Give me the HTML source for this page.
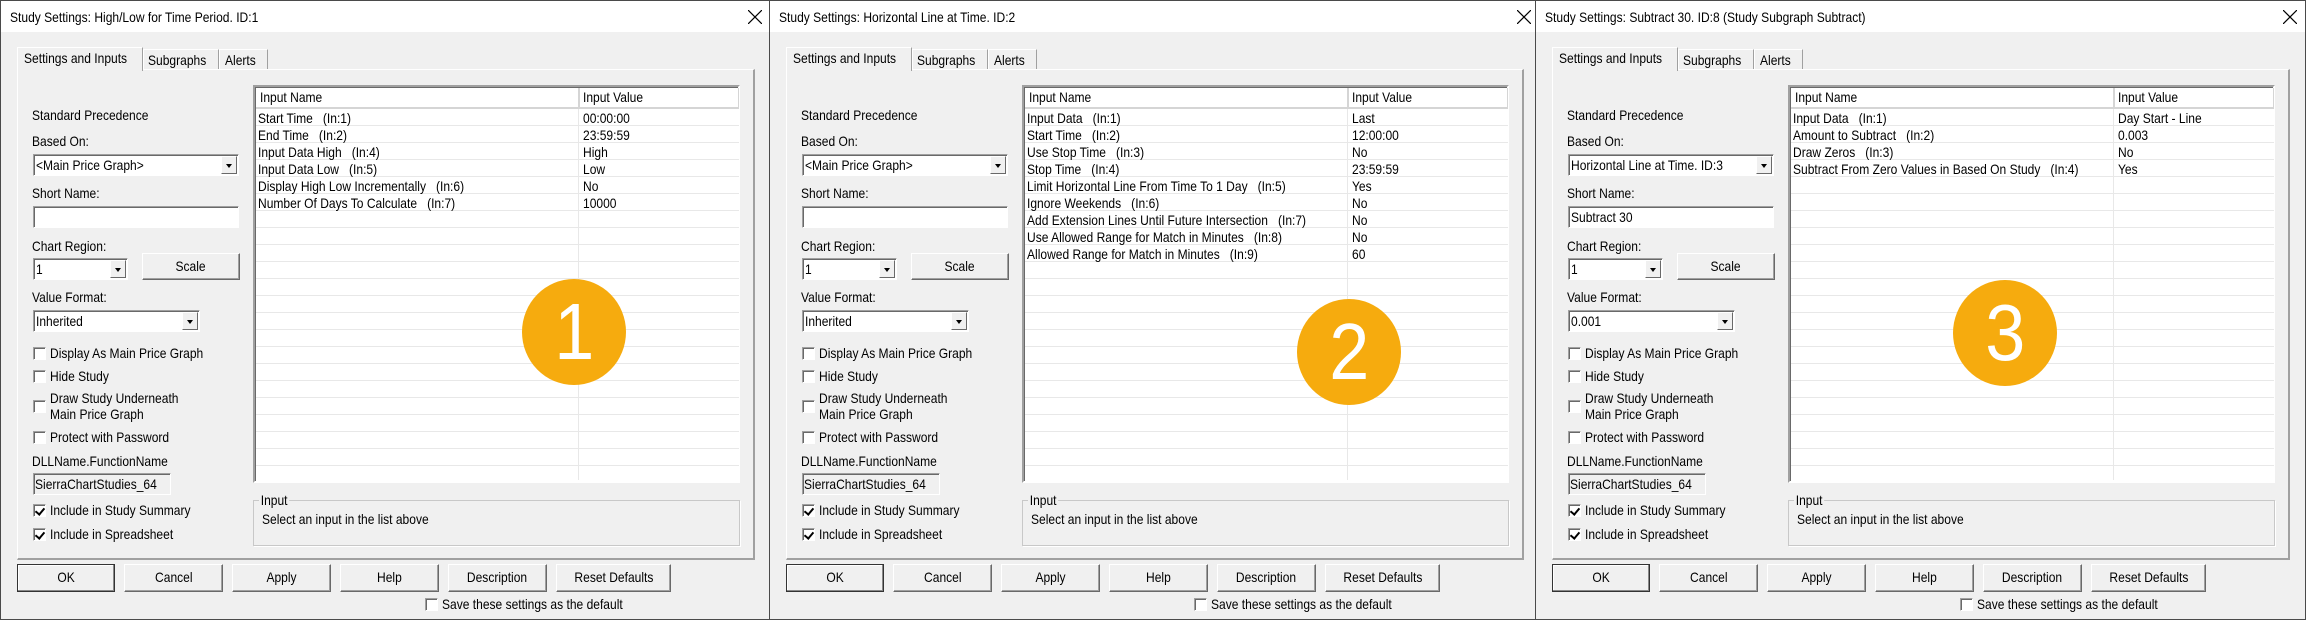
<!DOCTYPE html>
<html><head><meta charset="utf-8">
<style>
*{margin:0;padding:0;box-sizing:border-box}
body{width:2306px;height:620px;background:#f0f0f0;position:relative;overflow:hidden;font-family:"Liberation Sans",Arial,sans-serif;font-size:14px;color:#000}
.dlg{position:absolute;top:0;width:771px;height:620px;background:#f0f0f0;border:1px solid #4a4a4a}
.dlg div,.dlg span{position:absolute}
.tb{left:0;top:0;right:0;height:31px;background:#fff}
.t{white-space:nowrap;line-height:16px;height:16px;transform:scaleX(.86);transform-origin:0 50%}
.tab{background:#f0f0f0;border:1px solid #fff;border-right:1px solid #a0a0a0;border-bottom:none}
.panel{left:16px;top:68px;width:738px;height:491px;border:1px solid #fff;border-right:2px solid #a0a0a0;border-bottom:2px solid #a0a0a0}
.sunk{background:#fff;border:1px solid #a0a0a0;border-right-color:#fff;border-bottom-color:#fff;box-shadow:inset 1px 1px 0 #696969}
.dd{right:1px;top:1px;width:16px;height:18px;background:#f0f0f0;border:1px solid #fff;border-right-color:#696969;border-bottom-color:#696969}
.dd:after{content:"";position:absolute;left:4px;top:7px;border-left:3px solid transparent;border-right:3px solid transparent;border-top:4px solid #000}
.cb{width:13px;height:13px;background:#fff;border:1px solid #a0a0a0;border-right-color:#fff;border-bottom-color:#fff;box-shadow:inset 1px 1px 0 #696969}
.ck:after{content:"";position:absolute;left:3px;top:1px;width:4px;height:7px;border:solid #000;border-width:0 2px 2px 0;transform:rotate(40deg)}
.btn{height:28px;background:#f0f0f0;border:1px solid #fff;border-right-color:#696969;border-bottom-color:#696969;box-shadow:inset -1px -1px 0 #a0a0a0;text-align:center;line-height:25px}
.btn span{position:static!important;display:inline-block;transform:scaleX(.86)}
.list{left:252px;top:84px;width:487px;height:398px;background:#fff;border:2px solid #a0a0a0;border-right-color:#fff;border-bottom-color:#fff;box-shadow:inset 1px 1px 0 #696969}
.hdr{left:1px;top:1px;width:483px;height:21px;background:#fff;border-bottom:2px solid #d5d5d5}
.grid{left:1px;top:22px;width:483px;height:371px;background:repeating-linear-gradient(to bottom,transparent 0,transparent 16px,#e8e8e8 16px,#e8e8e8 17px)}
.vl{left:323px;top:22px;width:1px;height:371px;background:#e8e8e8}
.circ{width:104px;height:106px;border-radius:50%;background:#f6ab0e;color:#fff;font-size:80px;text-align:center;line-height:106px}
.circ span{position:static!important;display:inline-block;transform:scaleX(.9)}
.grp{left:252px;top:499px;width:487px;height:46px;border:1px solid #c8c8c8;box-shadow:1px 1px 0 #fff}
</style></head><body>

<!-- DIALOG 1 -->
<div class="dlg" style="left:0">
 <div class="tb"></div>
 <span class="t" style="left:9px;top:8px">Study Settings: High/Low for Time Period. ID:1</span>
 <svg style="position:absolute;left:747px;top:9px" width="14" height="14"><path d="M0 0L14 14M14 0L0 14" stroke="#000" stroke-width="1.2"/></svg>
 <div class="panel"></div>
 <div class="tab" style="left:16px;top:46px;width:126px;height:24px"></div>
 <span class="t" style="left:23px;top:49px">Settings and Inputs</span>
 <div class="tab" style="left:142px;top:48px;width:76px;height:20px"></div>
 <span class="t" style="left:147px;top:51px">Subgraphs</span>
 <div class="tab" style="left:218px;top:48px;width:49px;height:20px"></div>
 <span class="t" style="left:224px;top:51px">Alerts</span>
 <span class="t" style="left:31px;top:106px">Standard Precedence</span>
 <span class="t" style="left:31px;top:132px">Based On:</span>
 <div class="sunk" style="left:32px;top:153px;width:206px;height:22px"><div class="dd"></div></div>
 <span class="t" style="left:35px;top:156px">&lt;Main Price Graph&gt;</span>
 <span class="t" style="left:31px;top:184px">Short Name:</span>
 <div class="sunk" style="left:32px;top:205px;width:206px;height:22px"></div>
 <span class="t" style="left:31px;top:237px">Chart Region:</span>
 <div class="sunk" style="left:32px;top:257px;width:95px;height:22px"><div class="dd"></div></div>
 <span class="t" style="left:35px;top:260px">1</span>
 <div class="btn" style="left:141px;top:252px;width:98px;height:27px"><span>Scale</span></div>
 <span class="t" style="left:31px;top:288px">Value Format:</span>
 <div class="sunk" style="left:32px;top:309px;width:167px;height:22px"><div class="dd"></div></div>
 <span class="t" style="left:35px;top:312px">Inherited</span>
 <div class="cb" style="left:32px;top:346px"></div><span class="t" style="left:49px;top:344px">Display As Main Price Graph</span>
 <div class="cb" style="left:32px;top:369px"></div><span class="t" style="left:49px;top:367px">Hide Study</span>
 <div class="cb" style="left:32px;top:399px"></div><span class="t" style="left:49px;top:389px">Draw Study Underneath</span><span class="t" style="left:49px;top:405px">Main Price Graph</span>
 <div class="cb" style="left:32px;top:430px"></div><span class="t" style="left:49px;top:428px">Protect with Password</span>
 <span class="t" style="left:31px;top:452px">DLLName.FunctionName</span>
 <div class="sunk" style="left:32px;top:472px;width:138px;height:22px;background:#f0f0f0"></div>
 <span class="t" style="left:34px;top:475px">SierraChartStudies_64</span>
 <div class="cb ck" style="left:32px;top:503px"></div><span class="t" style="left:49px;top:501px">Include in Study Summary</span>
 <div class="cb ck" style="left:32px;top:527px"></div><span class="t" style="left:49px;top:525px">Include in Spreadsheet</span>
 <div class="list"><div class="hdr"><div style="left:322px;top:0;width:2px;height:20px;background:#d5d5d5"></div><div style="left:482px;top:0;width:1px;height:20px;background:#d5d5d5"></div></div><div class="grid"></div><div class="vl"></div></div>
 <span class="t" style="left:259px;top:88px">Input Name</span><span class="t" style="left:582px;top:88px">Input Value</span>
 <span class="t" style="left:257px;top:109px">Start Time&nbsp;&nbsp; (In:1)</span><span class="t" style="left:582px;top:109px">00:00:00</span>
 <span class="t" style="left:257px;top:126px">End Time&nbsp;&nbsp; (In:2)</span><span class="t" style="left:582px;top:126px">23:59:59</span>
 <span class="t" style="left:257px;top:143px">Input Data High&nbsp;&nbsp; (In:4)</span><span class="t" style="left:582px;top:143px">High</span>
 <span class="t" style="left:257px;top:160px">Input Data Low&nbsp;&nbsp; (In:5)</span><span class="t" style="left:582px;top:160px">Low</span>
 <span class="t" style="left:257px;top:177px">Display High Low Incrementally&nbsp;&nbsp; (In:6)</span><span class="t" style="left:582px;top:177px">No</span>
 <span class="t" style="left:257px;top:194px">Number Of Days To Calculate&nbsp;&nbsp; (In:7)</span><span class="t" style="left:582px;top:194px">10000</span>
 <div class="circ" style="left:521px;top:278px"><span>1</span></div>
 <div class="grp"></div>
 <span class="t" style="left:258px;top:491px;background:#f0f0f0;padding:0 2px">Input</span>
 <span class="t" style="left:261px;top:510px">Select an input in the list above</span>
 <div class="btn" style="left:16px;top:563px;width:98px;border:1px solid #333;box-shadow:inset -1px -1px 0 #888,inset 1px 1px 0 #fff"><span>OK</span></div>
 <div class="btn" style="left:123px;top:563px;width:99px"><span>Cancel</span></div>
 <div class="btn" style="left:231px;top:563px;width:99px"><span>Apply</span></div>
 <div class="btn" style="left:339px;top:563px;width:99px"><span>Help</span></div>
 <div class="btn" style="left:447px;top:563px;width:99px"><span>Description</span></div>
 <div class="btn" style="left:555px;top:563px;width:115px"><span>Reset Defaults</span></div>
 <div class="cb" style="left:424px;top:597px"></div><span class="t" style="left:441px;top:595px">Save these settings as the default</span>
</div>

<!-- DIALOG 2 -->
<div class="dlg" style="left:769px">
 <div class="tb"></div>
 <span class="t" style="left:9px;top:8px">Study Settings: Horizontal Line at Time. ID:2</span>
 <svg style="position:absolute;left:747px;top:9px" width="14" height="14"><path d="M0 0L14 14M14 0L0 14" stroke="#000" stroke-width="1.2"/></svg>
 <div class="panel"></div>
 <div class="tab" style="left:16px;top:46px;width:126px;height:24px"></div>
 <span class="t" style="left:23px;top:49px">Settings and Inputs</span>
 <div class="tab" style="left:142px;top:48px;width:76px;height:20px"></div>
 <span class="t" style="left:147px;top:51px">Subgraphs</span>
 <div class="tab" style="left:218px;top:48px;width:49px;height:20px"></div>
 <span class="t" style="left:224px;top:51px">Alerts</span>
 <span class="t" style="left:31px;top:106px">Standard Precedence</span>
 <span class="t" style="left:31px;top:132px">Based On:</span>
 <div class="sunk" style="left:32px;top:153px;width:206px;height:22px"><div class="dd"></div></div>
 <span class="t" style="left:35px;top:156px">&lt;Main Price Graph&gt;</span>
 <span class="t" style="left:31px;top:184px">Short Name:</span>
 <div class="sunk" style="left:32px;top:205px;width:206px;height:22px"></div>
 <span class="t" style="left:31px;top:237px">Chart Region:</span>
 <div class="sunk" style="left:32px;top:257px;width:95px;height:22px"><div class="dd"></div></div>
 <span class="t" style="left:35px;top:260px">1</span>
 <div class="btn" style="left:141px;top:252px;width:98px;height:27px"><span>Scale</span></div>
 <span class="t" style="left:31px;top:288px">Value Format:</span>
 <div class="sunk" style="left:32px;top:309px;width:167px;height:22px"><div class="dd"></div></div>
 <span class="t" style="left:35px;top:312px">Inherited</span>
 <div class="cb" style="left:32px;top:346px"></div><span class="t" style="left:49px;top:344px">Display As Main Price Graph</span>
 <div class="cb" style="left:32px;top:369px"></div><span class="t" style="left:49px;top:367px">Hide Study</span>
 <div class="cb" style="left:32px;top:399px"></div><span class="t" style="left:49px;top:389px">Draw Study Underneath</span><span class="t" style="left:49px;top:405px">Main Price Graph</span>
 <div class="cb" style="left:32px;top:430px"></div><span class="t" style="left:49px;top:428px">Protect with Password</span>
 <span class="t" style="left:31px;top:452px">DLLName.FunctionName</span>
 <div class="sunk" style="left:32px;top:472px;width:138px;height:22px;background:#f0f0f0"></div>
 <span class="t" style="left:34px;top:475px">SierraChartStudies_64</span>
 <div class="cb ck" style="left:32px;top:503px"></div><span class="t" style="left:49px;top:501px">Include in Study Summary</span>
 <div class="cb ck" style="left:32px;top:527px"></div><span class="t" style="left:49px;top:525px">Include in Spreadsheet</span>
 <div class="list"><div class="hdr"><div style="left:322px;top:0;width:2px;height:20px;background:#d5d5d5"></div><div style="left:482px;top:0;width:1px;height:20px;background:#d5d5d5"></div></div><div class="grid"></div><div class="vl"></div></div>
 <span class="t" style="left:259px;top:88px">Input Name</span><span class="t" style="left:582px;top:88px">Input Value</span>
 <span class="t" style="left:257px;top:109px">Input Data&nbsp;&nbsp; (In:1)</span><span class="t" style="left:582px;top:109px">Last</span>
 <span class="t" style="left:257px;top:126px">Start Time&nbsp;&nbsp; (In:2)</span><span class="t" style="left:582px;top:126px">12:00:00</span>
 <span class="t" style="left:257px;top:143px">Use Stop Time&nbsp;&nbsp; (In:3)</span><span class="t" style="left:582px;top:143px">No</span>
 <span class="t" style="left:257px;top:160px">Stop Time&nbsp;&nbsp; (In:4)</span><span class="t" style="left:582px;top:160px">23:59:59</span>
 <span class="t" style="left:257px;top:177px">Limit Horizontal Line From Time To 1 Day&nbsp;&nbsp; (In:5)</span><span class="t" style="left:582px;top:177px">Yes</span>
 <span class="t" style="left:257px;top:194px">Ignore Weekends&nbsp;&nbsp; (In:6)</span><span class="t" style="left:582px;top:194px">No</span>
 <span class="t" style="left:257px;top:211px">Add Extension Lines Until Future Intersection&nbsp;&nbsp; (In:7)</span><span class="t" style="left:582px;top:211px">No</span>
 <span class="t" style="left:257px;top:228px">Use Allowed Range for Match in Minutes&nbsp;&nbsp; (In:8)</span><span class="t" style="left:582px;top:228px">No</span>
 <span class="t" style="left:257px;top:245px">Allowed Range for Match in Minutes&nbsp;&nbsp; (In:9)</span><span class="t" style="left:582px;top:245px">60</span>
 <div class="circ" style="left:527px;top:298px"><span>2</span></div>
 <div class="grp"></div>
 <span class="t" style="left:258px;top:491px;background:#f0f0f0;padding:0 2px">Input</span>
 <span class="t" style="left:261px;top:510px">Select an input in the list above</span>
 <div class="btn" style="left:16px;top:563px;width:98px;border:1px solid #333;box-shadow:inset -1px -1px 0 #888,inset 1px 1px 0 #fff"><span>OK</span></div>
 <div class="btn" style="left:123px;top:563px;width:99px"><span>Cancel</span></div>
 <div class="btn" style="left:231px;top:563px;width:99px"><span>Apply</span></div>
 <div class="btn" style="left:339px;top:563px;width:99px"><span>Help</span></div>
 <div class="btn" style="left:447px;top:563px;width:99px"><span>Description</span></div>
 <div class="btn" style="left:555px;top:563px;width:115px"><span>Reset Defaults</span></div>
 <div class="cb" style="left:424px;top:597px"></div><span class="t" style="left:441px;top:595px">Save these settings as the default</span>
</div>

<!-- DIALOG 3 -->
<div class="dlg" style="left:1535px">
 <div class="tb"></div>
 <span class="t" style="left:9px;top:8px">Study Settings: Subtract 30. ID:8 (Study Subgraph Subtract)</span>
 <svg style="position:absolute;left:747px;top:9px" width="14" height="14"><path d="M0 0L14 14M14 0L0 14" stroke="#000" stroke-width="1.2"/></svg>
 <div class="panel"></div>
 <div class="tab" style="left:16px;top:46px;width:126px;height:24px"></div>
 <span class="t" style="left:23px;top:49px">Settings and Inputs</span>
 <div class="tab" style="left:142px;top:48px;width:76px;height:20px"></div>
 <span class="t" style="left:147px;top:51px">Subgraphs</span>
 <div class="tab" style="left:218px;top:48px;width:49px;height:20px"></div>
 <span class="t" style="left:224px;top:51px">Alerts</span>
 <span class="t" style="left:31px;top:106px">Standard Precedence</span>
 <span class="t" style="left:31px;top:132px">Based On:</span>
 <div class="sunk" style="left:32px;top:153px;width:206px;height:22px"><div class="dd"></div></div>
 <span class="t" style="left:35px;top:156px">Horizontal Line at Time. ID:3</span>
 <span class="t" style="left:31px;top:184px">Short Name:</span>
 <div class="sunk" style="left:32px;top:205px;width:206px;height:22px"></div>
 <span class="t" style="left:35px;top:208px">Subtract 30</span>
 <span class="t" style="left:31px;top:237px">Chart Region:</span>
 <div class="sunk" style="left:32px;top:257px;width:95px;height:22px"><div class="dd"></div></div>
 <span class="t" style="left:35px;top:260px">1</span>
 <div class="btn" style="left:141px;top:252px;width:98px;height:27px"><span>Scale</span></div>
 <span class="t" style="left:31px;top:288px">Value Format:</span>
 <div class="sunk" style="left:32px;top:309px;width:167px;height:22px"><div class="dd"></div></div>
 <span class="t" style="left:35px;top:312px">0.001</span>
 <div class="cb" style="left:32px;top:346px"></div><span class="t" style="left:49px;top:344px">Display As Main Price Graph</span>
 <div class="cb" style="left:32px;top:369px"></div><span class="t" style="left:49px;top:367px">Hide Study</span>
 <div class="cb" style="left:32px;top:399px"></div><span class="t" style="left:49px;top:389px">Draw Study Underneath</span><span class="t" style="left:49px;top:405px">Main Price Graph</span>
 <div class="cb" style="left:32px;top:430px"></div><span class="t" style="left:49px;top:428px">Protect with Password</span>
 <span class="t" style="left:31px;top:452px">DLLName.FunctionName</span>
 <div class="sunk" style="left:32px;top:472px;width:138px;height:22px;background:#f0f0f0"></div>
 <span class="t" style="left:34px;top:475px">SierraChartStudies_64</span>
 <div class="cb ck" style="left:32px;top:503px"></div><span class="t" style="left:49px;top:501px">Include in Study Summary</span>
 <div class="cb ck" style="left:32px;top:527px"></div><span class="t" style="left:49px;top:525px">Include in Spreadsheet</span>
 <div class="list"><div class="hdr"><div style="left:322px;top:0;width:2px;height:20px;background:#d5d5d5"></div><div style="left:482px;top:0;width:1px;height:20px;background:#d5d5d5"></div></div><div class="grid"></div><div class="vl"></div></div>
 <span class="t" style="left:259px;top:88px">Input Name</span><span class="t" style="left:582px;top:88px">Input Value</span>
 <span class="t" style="left:257px;top:109px">Input Data&nbsp;&nbsp; (In:1)</span><span class="t" style="left:582px;top:109px">Day Start - Line</span>
 <span class="t" style="left:257px;top:126px">Amount to Subtract&nbsp;&nbsp; (In:2)</span><span class="t" style="left:582px;top:126px">0.003</span>
 <span class="t" style="left:257px;top:143px">Draw Zeros&nbsp;&nbsp; (In:3)</span><span class="t" style="left:582px;top:143px">No</span>
 <span class="t" style="left:257px;top:160px">Subtract From Zero Values in Based On Study&nbsp;&nbsp; (In:4)</span><span class="t" style="left:582px;top:160px">Yes</span>
 <div class="circ" style="left:417px;top:279px"><span>3</span></div>
 <div class="grp"></div>
 <span class="t" style="left:258px;top:491px;background:#f0f0f0;padding:0 2px">Input</span>
 <span class="t" style="left:261px;top:510px">Select an input in the list above</span>
 <div class="btn" style="left:16px;top:563px;width:98px;border:1px solid #333;box-shadow:inset -1px -1px 0 #888,inset 1px 1px 0 #fff"><span>OK</span></div>
 <div class="btn" style="left:123px;top:563px;width:99px"><span>Cancel</span></div>
 <div class="btn" style="left:231px;top:563px;width:99px"><span>Apply</span></div>
 <div class="btn" style="left:339px;top:563px;width:99px"><span>Help</span></div>
 <div class="btn" style="left:447px;top:563px;width:99px"><span>Description</span></div>
 <div class="btn" style="left:555px;top:563px;width:115px"><span>Reset Defaults</span></div>
 <div class="cb" style="left:424px;top:597px"></div><span class="t" style="left:441px;top:595px">Save these settings as the default</span>
</div>
</body></html>
